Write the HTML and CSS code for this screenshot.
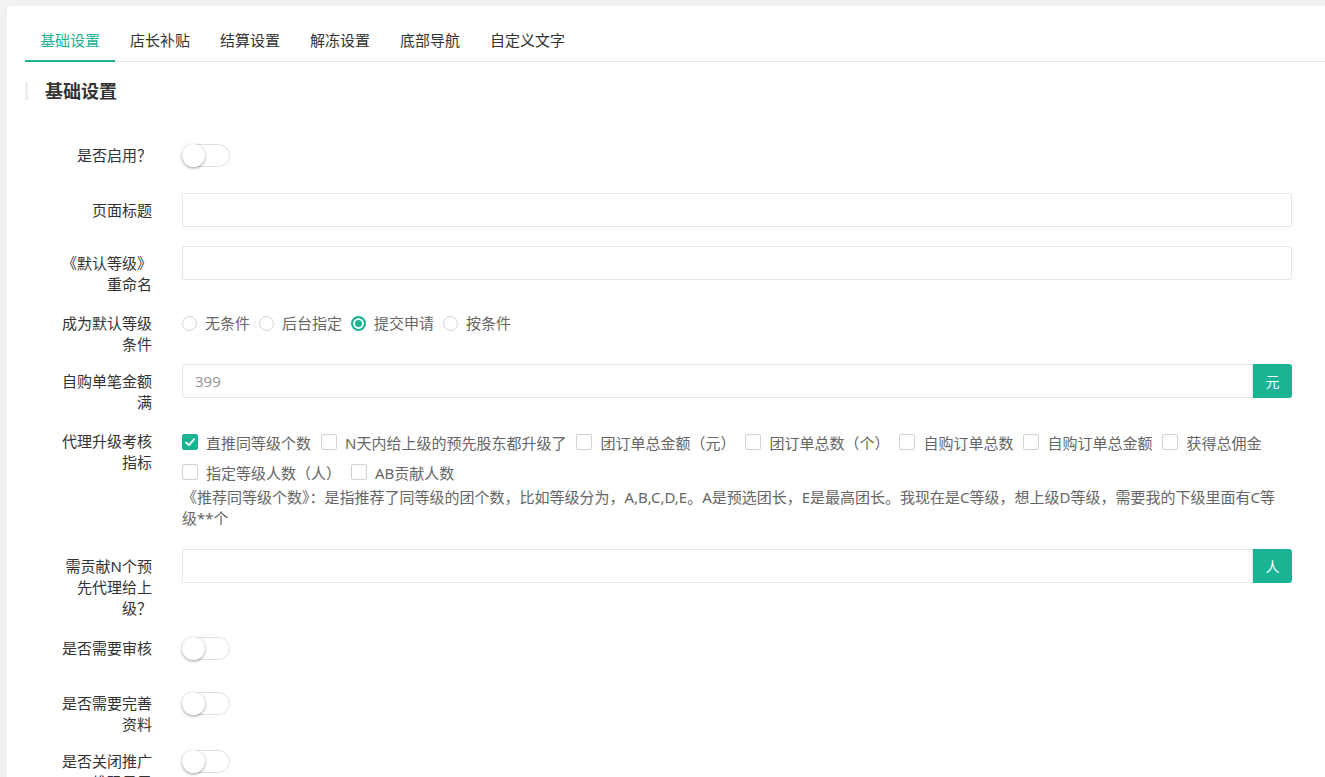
FILE: index.html
```html
<!DOCTYPE html>
<html lang="zh-CN">
<head>
<meta charset="utf-8">
<title>基础设置</title>
<link rel="stylesheet" href="styles.css">
</head>
<body>
<div class="card">
  <ul class="tabs">
    <li class="tab active">基础设置</li>
    <li class="tab">店长补贴</li>
    <li class="tab">结算设置</li>
    <li class="tab">解冻设置</li>
    <li class="tab">底部导航</li>
    <li class="tab">自定义文字</li>
  </ul>

  <h2 class="section-title">基础设置</h2>

  <form class="form">
    <div class="row h55">
      <label class="label">是否启用？</label>
      <div class="control"><span class="switch"><span class="knob"></span></span></div>
    </div>

    <div class="row h53">
      <label class="label">页面标题</label>
      <div class="control"><input class="input" type="text"></div>
    </div>

    <div class="row h60">
      <label class="label">《默认等级》重命名</label>
      <div class="control"><input class="input" type="text"></div>
    </div>

    <div class="row h58">
      <label class="label">成为默认等级条件</label>
      <div class="control options">
        <span class="radio"><span class="dot"></span>无条件</span>
        <span class="radio"><span class="dot"></span>后台指定</span>
        <span class="radio"><span class="dot on"></span>提交申请</span>
        <span class="radio"><span class="dot"></span>按条件</span>
      </div>
    </div>

    <div class="row h60">
      <label class="label">自购单笔金额满</label>
      <div class="control input-group">
        <input class="input" type="text" placeholder="399">
        <span class="addon">元</span>
      </div>
    </div>

    <div class="row h125">
      <label class="label">代理升级考核指标</label>
      <div class="control">
        <div class="checks">
          <span class="check"><span class="box on"><svg width="14" height="14" viewBox="0 0 14 14"><polyline points="3,7.5 6,10.2 11,4.3" fill="none" stroke="#fff" stroke-width="1.8" stroke-linecap="round" stroke-linejoin="round"/></svg></span>直推同等级个数</span>
          <span class="check"><span class="box"></span>N天内给上级的预先股东都升级了</span>
          <span class="check"><span class="box"></span>团订单总金额（元）</span>
          <span class="check"><span class="box"></span>团订单总数（个）</span>
          <span class="check"><span class="box"></span>自购订单总数</span>
          <span class="check"><span class="box"></span>自购订单总金额</span>
          <span class="check"><span class="box"></span>获得总佣金</span>
          <span class="check"><span class="box"></span>指定等级人数（人）</span>
          <span class="check"><span class="box"></span>AB贡献人数</span>
        </div>
        <p class="hint">《推荐同等级个数》：是指推荐了同等级的团个数，比如等级分为，A,B,C,D,E。A是预选团长，E是最高团长。我现在是C等级，想上级D等级，需要我的下级里面有C等<br>级**个</p>
      </div>
    </div>

    <div class="row h82">
      <label class="label">需贡献N个预先代理给上级？</label>
      <div class="control input-group">
        <input class="input" type="text">
        <span class="addon">人</span>
      </div>
    </div>

    <div class="row h55">
      <label class="label">是否需要审核</label>
      <div class="control"><span class="switch"><span class="knob"></span></span></div>
    </div>

    <div class="row h58">
      <label class="label">是否需要完善资料</label>
      <div class="control"><span class="switch"><span class="knob"></span></span></div>
    </div>

    <div class="row h60">
      <label class="label">是否关闭推广二维码显示</label>
      <div class="control"><span class="switch"><span class="knob"></span></span></div>
    </div>
  </form>
</div>
</body>
</html>
```

FILE: styles.css
```css
html, body {
  margin: 0;
  height: 100%;
  overflow: hidden;
}

body {
  background: #f2f2f2;
  font-family: "Noto Sans", "Noto Sans CJK SC", sans-serif;
  font-size: 15px;
  color: #333;
}

.card {
  margin: 6px -10px 0 7px;
  padding: 14px 0 40px 18px;
  background: #fff;
  border-radius: 4px;
  min-height: 900px;
}

/* tabs */
.tabs {
  list-style: none;
  margin: 0;
  padding: 0;
  display: flex;
  border-bottom: 1px solid #e6e6e6;
}

.tab {
  position: relative;
  padding: 0 15px;
  line-height: 41px;
  font-size: 15px;
  color: #333;
  white-space: nowrap;
}

.tab.active {
  color: #1ab394;
}

.tab.active::after {
  content: "";
  position: absolute;
  left: 0;
  right: 0;
  bottom: -1px;
  height: 2px;
  background: #1ab394;
}

/* section title */
.section-title {
  margin: 20px 0 0;
  padding-left: 17px;
  border-left: 3px solid #eeeeee;
  font-size: 18px;
  line-height: 18px;
  font-weight: 700;
  color: #333;
}

/* form */
.form {
  margin-top: 38px;
  padding-right: 43px;
}

.row {
  display: flex;
  align-items: flex-start;
}

.h53 { height: 53px; }
.h55 { height: 55px; }
.h58 { height: 58px; }
.h60 { height: 60px; }
.h82 { height: 82px; }
.h125 { height: 125px; }

.label {
  flex: none;
  width: 92px;
  margin-left: 35px;
  padding: 7px 30px 0 0;
  line-height: 21px;
  text-align: right;
  color: #333;
}

.control {
  flex: 1;
  min-width: 0;
}

.input {
  display: block;
  width: 100%;
  height: 34px;
  box-sizing: border-box;
  border: 1px solid #e6e6e6;
  border-radius: 2px;
  padding: 0 12px;
  font: inherit;
  font-size: 15px;
  color: #333;
  background: #fff;
  outline: none;
}

.input::placeholder {
  color: #999;
}

.input-group {
  display: flex;
}

.input-group .input {
  flex: 1;
  width: auto;
  border-radius: 2px 0 0 2px;
}

.addon {
  flex: none;
  width: 39px;
  height: 34px;
  display: flex;
  align-items: center;
  justify-content: center;
  background: #1ab394;
  color: #fff;
  font-size: 14px;
  border-radius: 0 3px 3px 0;
}

/* radios */
.options {
  display: flex;
  flex-wrap: wrap;
  padding-top: 7px;
  line-height: 21px;
  color: #666;
}

.radio {
  display: inline-flex;
  align-items: center;
  margin-right: 9px;
}

.dot {
  width: 15px;
  height: 15px;
  box-sizing: border-box;
  border: 1px solid #d2d2d2;
  border-radius: 50%;
  margin-right: 8px;
  background: #fff;
}

.dot.on {
  border: 2px solid #1ab394;
  background: #1ab394;
  box-shadow: inset 0 0 0 2px #fff;
}

/* checkboxes */
.checks {
  display: flex;
  flex-wrap: wrap;
  padding-top: 3px;
  color: #666;
}

.check {
  display: inline-flex;
  align-items: center;
  height: 30px;
  margin-right: 10px;
  white-space: nowrap;
}

.box {
  width: 16px;
  height: 16px;
  box-sizing: border-box;
  border: 1px solid #d2d2d2;
  border-radius: 2px;
  margin-right: 8px;
  display: flex;
  align-items: center;
  justify-content: center;
  background: #fff;
}

.box.on {
  background: #1ab394;
  border-color: #1ab394;
}

.hint {
  margin: 0;
  line-height: 21px;
  color: #666;
}

/* switch */
.switch {
  position: relative;
  display: block;
  margin-top: 6px;
  width: 48px;
  height: 23px;
  box-sizing: border-box;
  border: 1px solid #dfdfdf;
  border-radius: 12px;
  background: #fff;
}

.knob {
  position: absolute;
  left: -1px;
  top: -1px;
  width: 23px;
  height: 23px;
  border-radius: 50%;
  background: #fff;
  box-shadow: 0 1px 3px rgba(0, 0, 0, 0.4);
}
```
